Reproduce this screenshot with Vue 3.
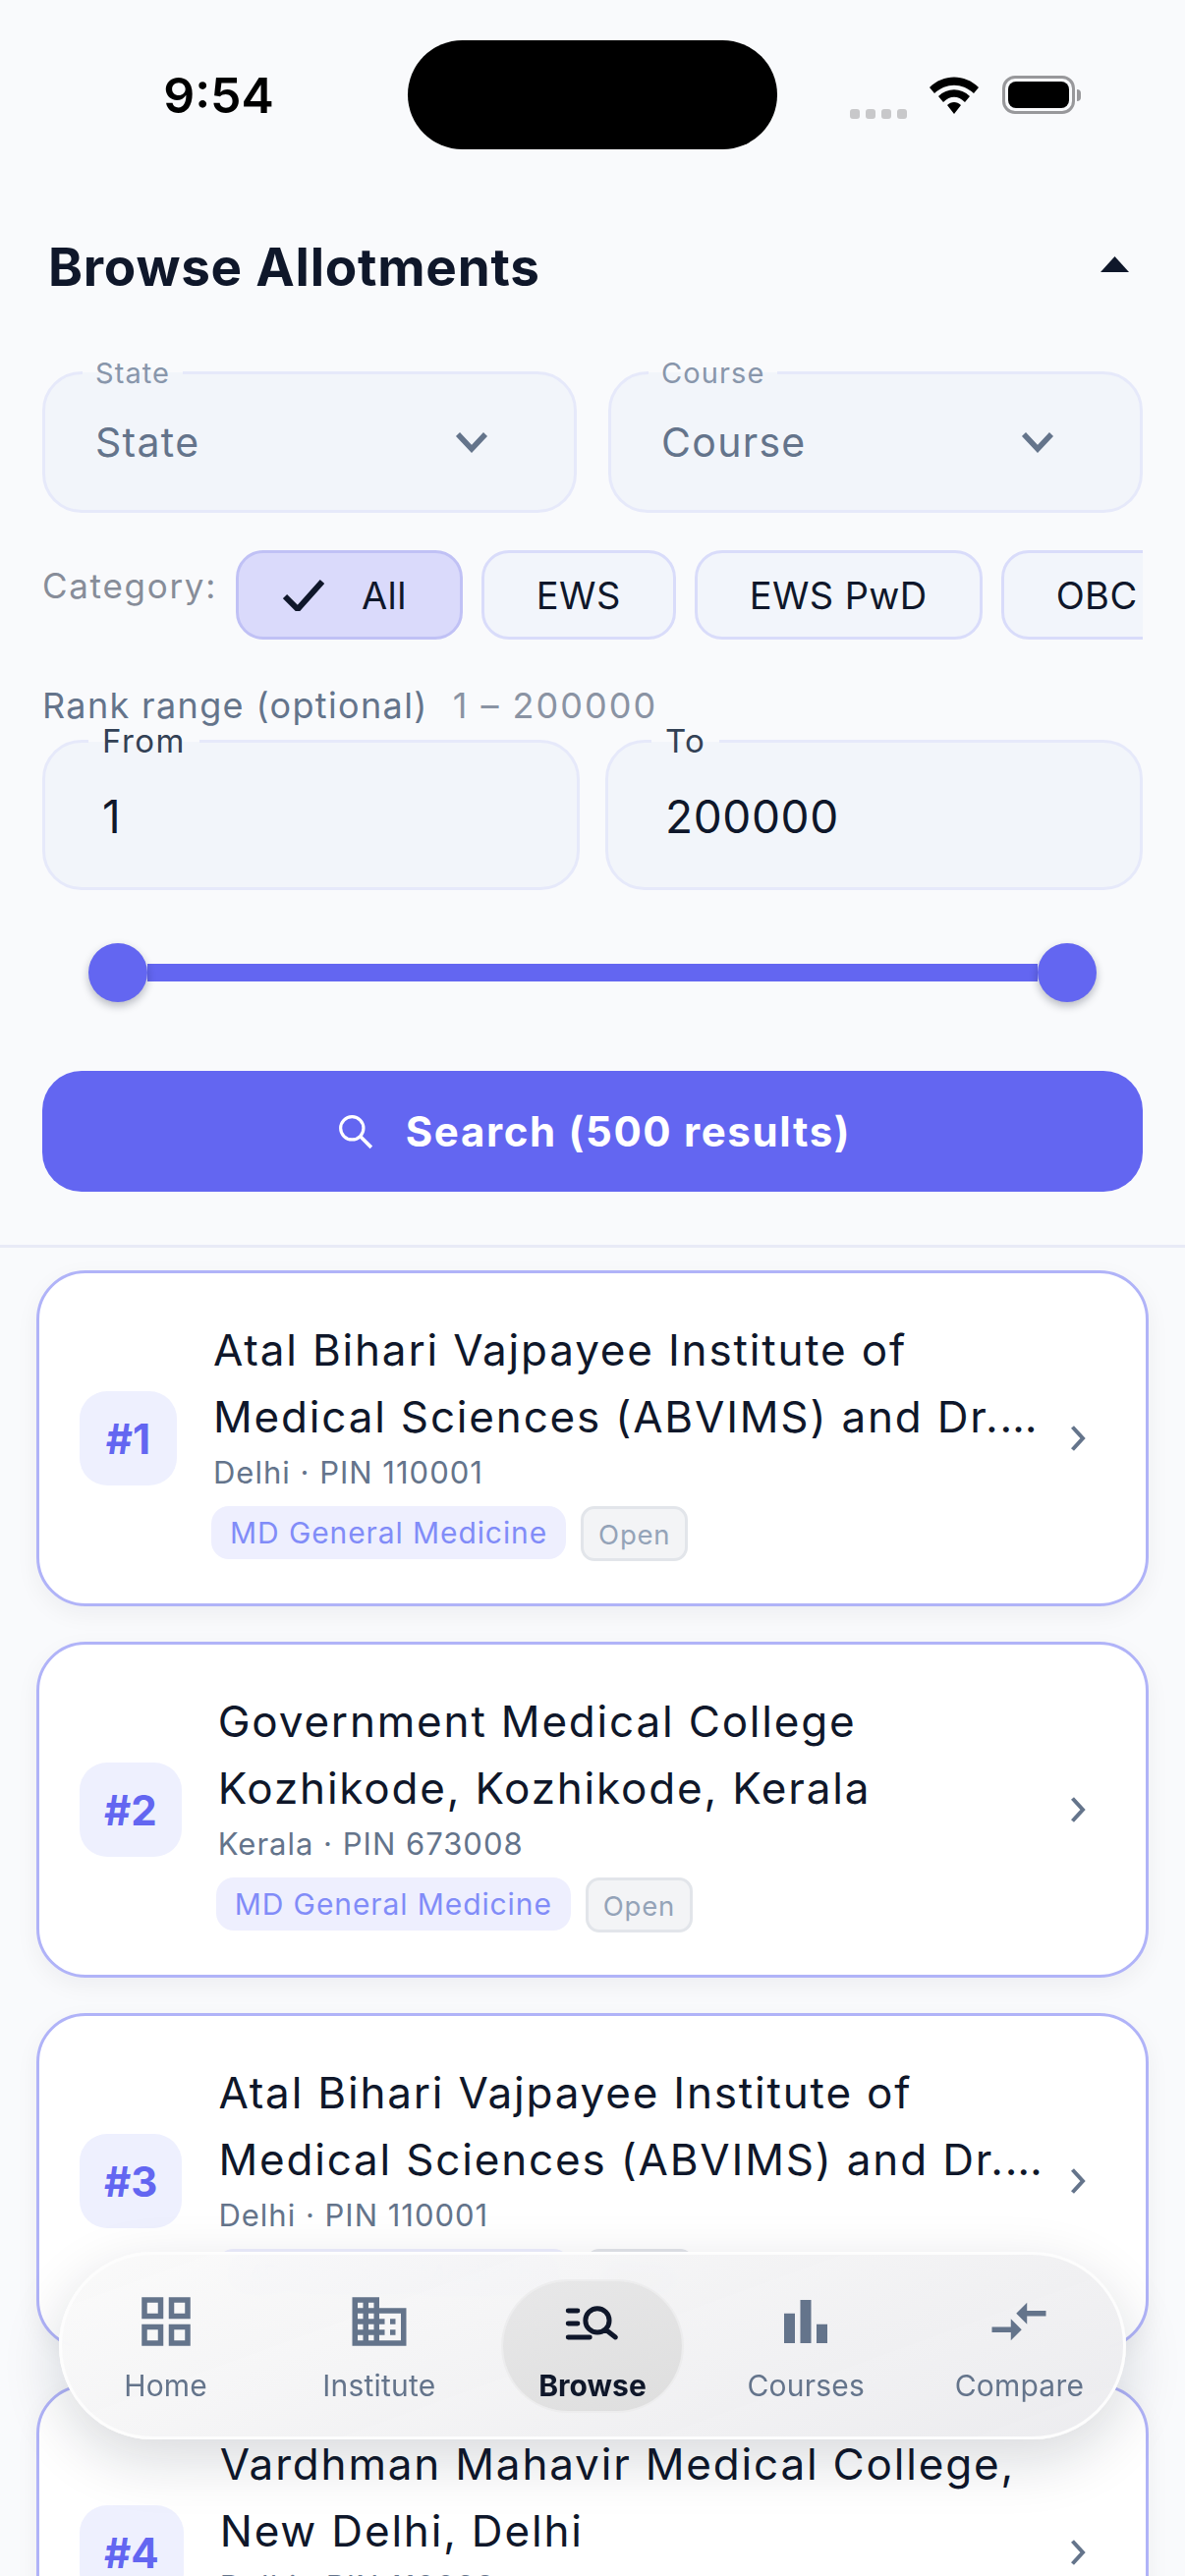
<template>
  <div class="screen">
    <div class="status">
      <div class="status-left"><span class="time">9:54</span></div>
      <div class="island"></div>
      <div class="status-right">
        <div class="signal"><i v-for="n in 4" :key="n"></i></div>
        <svg class="wifi" viewBox="0 0 50 38"><path d="M0 11 C14 -3 36 -3 50 11 L45 17 C33 6 17 6 5 17Z M9 20 C18 11 32 11 41 20 L36 26 C29 19 21 19 14 26Z M18 29 C22 25 28 25 32 29 L25 38Z" fill="#000"/></svg>
        <div class="battery"><div class="battery-fill"></div></div>
        <div class="battery-nub"></div>
      </div>
    </div>

    <div class="filters">
      <div class="title-row">
        <h1>Browse Allotments</h1>
        <svg class="collapse" viewBox="0 0 29 16"><path d="M14.5 0 L29 16 H0Z" fill="#0f172a"/></svg>
      </div>

      <div class="two-col select-row">
        <div v-for="s in selects" :key="s" class="field select">
          <span class="float-label">{{ s }}</span>
          <span class="select-value">{{ s }}</span>
          <svg class="select-arrow" viewBox="0 0 34 22"><path d="M3 3 L17 18 L31 3" fill="none" stroke="#64748b" stroke-width="5.5"/></svg>
        </div>
      </div>

      <div class="category-row">
        <span class="category-label">Category:</span>
        <div class="chips">
          <div v-for="c in categories" :key="c" class="chip" :class="{ on: c === 'All' }">
            <svg v-if="c === 'All'" class="check" viewBox="0 0 42 32"><path d="M2 17 L15 30 L40 2" fill="none" stroke="#0f172a" stroke-width="6"/></svg>
            {{ c }}
          </div>
        </div>
      </div>

      <div class="rank-label">Rank range (optional)<span>1 – 200000</span></div>
      <div class="two-col rank-row">
        <div v-for="r in ranks" :key="r.label" class="field rank">
          <span class="float-label dark">{{ r.label }}</span>
          <span class="rank-value">{{ r.value }}</span>
        </div>
      </div>

      <div class="slider">
        <div class="thumb"></div>
        <div class="track"></div>
        <div class="thumb"></div>
      </div>

      <button class="search">
        <svg viewBox="0 0 34 34"><circle cx="13.5" cy="13.5" r="11" fill="none" stroke="#fff" stroke-width="3"/><path d="M21.5 21.5 L32 32" stroke="#fff" stroke-width="3.4"/></svg>
        <span>Search (500 results)</span>
      </button>
    </div>

    <div class="list">
      <div v-for="(item, i) in results" :key="i" class="card">
        <div class="rank-badge">#{{ i + 1 }}</div>
        <div class="card-body">
          <div class="card-title">{{ item.name }}</div>
          <div class="card-sub">{{ item.state }} · PIN {{ item.pin }}</div>
          <div class="tags">
            <span class="tag-course">MD General Medicine</span>
            <span class="tag-open">Open</span>
          </div>
        </div>
        <svg class="chevron" viewBox="0 0 16 28"><path d="M2.5 2.5 L13 14 L2.5 25.5" fill="none" stroke="#64748b" stroke-width="4"/></svg>
      </div>
    </div>

    <nav class="tabbar">
      <div v-for="t in tabs" :key="t.label" class="tab" :class="{ active: t.label === 'Browse' }">
        <svg viewBox="0 0 24 24">
          <path v-if="t.line" :d="t.line" fill="none" stroke="currentColor" stroke-width="1.8" stroke-linecap="round"/>
          <path v-else :d="t.icon" fill="currentColor"/>
        </svg>
        <span>{{ t.label }}</span>
      </div>
    </nav>
  </div>
</template>

<script setup>
const selects = ['State', 'Course']
const categories = ['All', 'EWS', 'EWS PwD', 'OBC', 'OBC PwD']
const ranks = [
  { label: 'From', value: '1' },
  { label: 'To', value: '200000' }
]

const abvims = 'Atal Bihari Vajpayee Institute of Medical Sciences (ABVIMS) and Dr. Ram Manohar Lohia Hospital, New Delhi'
const results = [
  { name: abvims, state: 'Delhi', pin: '110001' },
  { name: 'Government Medical College Kozhikode, Kozhikode, Kerala', state: 'Kerala', pin: '673008' },
  { name: abvims, state: 'Delhi', pin: '110001' },
  { name: 'Vardhman Mahavir Medical College, New Delhi, Delhi', state: 'Delhi', pin: '110029' }
]

const tabs = [
  { label: 'Home', icon: 'M3 3v8h8V3H3zm6 6H5V5h4v4zm-6 4v8h8v-8H3zm6 6H5v-4h4v4zm4-16v8h8V3h-8zm6 6h-4V5h4v4zm-6 4v8h8v-8h-8zm6 6h-4v-4h4v4z' },
  { label: 'Institute', icon: 'M12 7V3H2v18h20V7H12zM6 19H4v-2h2v2zm0-4H4v-2h2v2zm0-4H4V9h2v2zm0-4H4V5h2v2zm4 12H8v-2h2v2zm0-4H8v-2h2v2zm0-4H8V9h2v2zm0-4H8V5h2v2zm10 12h-8v-2h2v-2h-2v-2h2v-2h-2V9h8v10zm-2-8h-2v2h2v-2zm0 4h-2v2h2v-2z' },
  { label: 'Browse', line: 'M3 8H6.5M3 12.7H6.5M3 17.8H11M18.2 11.6a4.4 4.4 0 1 1-8.8 0a4.4 4.4 0 1 1 8.8 0M16.9 15L20.5 17.8' },
  { label: 'Courses', icon: 'M4 9h4v11H4zm12 4h4v7h-4zm-6-9h4v16h-4z' },
  { label: 'Compare', icon: 'M9.01 14H2v2h7.01v3L13 15l-3.99-4v3zm5.98-1v-3H22V8h-7.01V5L11 9l3.99 4z' }
]
</script>

<style>
html, body { background: #f9fafc; }
</style>

<style scoped>
.screen {
  position: relative;
  width: 1206px;
  height: 2622px;
  overflow: hidden;
  background: #f9fafc;
  font-family: Inter, "Noto Sans", sans-serif;
  color: #0f172a;
}

.status {
  display: flex;
  padding-top: 41px;
  height: 111px;
}
.status-left {
  width: 415px;
  display: flex;
  justify-content: center;
  align-items: center;
  padding-left: 30px;
  box-sizing: border-box;
}
.time { font-size: 50px; font-weight: 600; color: #000; }
.island { width: 376px; height: 111px; border-radius: 56px; background: #000; }
.status-right {
  flex: 1;
  display: flex;
  align-items: center;
  padding-left: 74px;
}
.signal { display: flex; gap: 6px; margin-top: 38px; margin-right: 23px; }
.signal i { width: 10px; height: 10px; border-radius: 3px; background: #c8c8ca; }
.wifi { width: 50px; height: 38px; margin-right: 24px; }
.battery {
  box-sizing: border-box;
  width: 74px;
  height: 39px;
  border: 3.5px solid #98989b;
  border-radius: 13px;
  padding: 3px;
}
.battery-fill { height: 100%; border-radius: 8px; background: #000; }
.battery-nub { width: 4px; height: 12px; margin-left: 2px; border-radius: 0 4px 4px 0; background: #98989b; }

.filters { padding: 89px 43px 0; }
.title-row { display: flex; justify-content: space-between; align-items: center; height: 62px; padding: 0 14px 0 6px; }
h1 { margin: 0; font-size: 53px; font-weight: 700; letter-spacing: 0.75px; }
.collapse { width: 29px; height: 16px; margin-bottom: 6px; }

.two-col { display: flex; }
.select-row { margin-top: 75px; gap: 32px; }
.rank-row { margin-top: 14px; gap: 26px; }

.field {
  position: relative;
  flex: 1;
  box-sizing: border-box;
  display: flex;
  align-items: center;
  background: #f2f5fa;
  border: 3px solid #e6e9fa;
  border-radius: 40px;
}
.select { height: 144px; padding: 0 51px; justify-content: space-between; }
.rank { height: 153px; padding: 0 58px; }
.float-label {
  position: absolute;
  left: 38px;
  top: -20px;
  padding: 0 13px;
  background: linear-gradient(#f9fafc 50%, #f2f5fa 50%);
  font-size: 29px;
  line-height: 37px;
  letter-spacing: 1.1px;
  color: #8896ab;
}
.float-label.dark { top: -23px; left: 44px; padding: 0 14px; font-size: 33px; line-height: 43px; letter-spacing: 1.4px; color: #334155; }
.select-value { font-size: 41px; letter-spacing: 1.3px; color: #64748b; }
.select-arrow { width: 34px; height: 22px; margin-right: 36px; }
.rank-value { font-size: 46px; letter-spacing: 0.6px; margin-top: 3px; }

.category-row { display: flex; margin-top: 38px; gap: 20px; }
.category-label { width: 177px; flex-shrink: 0; font-size: 35px; line-height: 40px; margin-top: 16px; letter-spacing: 1.7px; color: #878d99; white-space: nowrap; }
.chips { flex: 1; min-width: 0; display: flex; gap: 19px; overflow: hidden; }
.chip {
  flex-shrink: 0;
  box-sizing: border-box;
  height: 91px;
  padding: 0 53px;
  display: flex;
  align-items: center;
  background: #f2f5fb;
  border: 3px solid #d9dcfa;
  border-radius: 28px;
  font-size: 38px;
  letter-spacing: 0.4px;
}
.chip.on { background: #dadafb; border-color: #c0c1f5; padding: 0 54px 0 45px; }
.check { width: 42px; height: 32px; margin-right: 38px; }

.rank-label { margin-top: 46px; font-size: 36px; line-height: 42px; letter-spacing: 1.35px; color: #64748b; white-space: nowrap; }
.rank-label span { margin-left: 25px; color: #8a93a3; letter-spacing: 2px; }

.slider { display: flex; align-items: center; margin: 54px 47px 0; height: 60px; }
.thumb { width: 60px; height: 60px; flex-shrink: 0; border-radius: 50%; background: #6366f1; box-shadow: 0 4px 8px rgba(15, 23, 42, 0.28); position: relative; z-index: 1; }
.track { flex: 1; height: 18px; background: #6366f1; }

.search {
  display: flex;
  justify-content: center;
  align-items: center;
  gap: 33px;
  width: 100%;
  height: 123px;
  margin-top: 70px;
  padding: 0 0 0 4px;
  border: 0;
  border-radius: 40px;
  background: #6366f1;
  color: #fff;
  font-family: inherit;
  font-size: 42px;
  font-weight: 700;
  letter-spacing: 1.65px;
}
.search svg { width: 36px; height: 36px; }

.list {
  margin-top: 54px;
  border-top: 3px solid #e8eaf6;
  padding: 23px 37px 0;
  display: flex;
  flex-direction: column;
  gap: 36px;
}
.card {
  flex-shrink: 0;
  box-sizing: border-box;
  height: 342px;
  display: flex;
  align-items: center;
  padding: 0 61px 0 41px;
  background: #fff;
  border: 3px solid #b0b3f8;
  border-radius: 50px;
  box-shadow: 0 8px 24px rgba(15, 23, 42, 0.05);
}
.rank-badge {
  flex-shrink: 0;
  box-sizing: border-box;
  min-width: 99px;
  height: 96px;
  padding: 0 25px;
  display: flex;
  justify-content: center;
  align-items: center;
  border-radius: 28px;
  background: #eef0fe;
  color: #6366f1;
  font-size: 42px;
  font-weight: 700;
}
.card-body { flex: 1; min-width: 0; margin-left: 37px; }
.card-title {
  font-size: 44px;
  line-height: 68px;
  letter-spacing: 1.82px;
  display: -webkit-box;
  -webkit-line-clamp: 2;
  -webkit-box-orient: vertical;
  overflow: hidden;
}
.card-sub { font-size: 31px; line-height: 46px; letter-spacing: 1px; color: #64748b; }
.tags { display: flex; align-items: flex-start; gap: 15px; margin: 11px 0 0 -2px; }
.tag-course {
  height: 54px;
  padding: 0 19px;
  display: flex;
  align-items: center;
  border-radius: 18px;
  background: #eeeffe;
  color: #818cf8;
  font-size: 30px;
  letter-spacing: 0.9px;
}
.tag-open {
  box-sizing: border-box;
  height: 56px;
  padding: 2px 15px 0;
  display: flex;
  align-items: center;
  border: 3px solid #e2e5ea;
  border-radius: 14px;
  background: #f3f4f6;
  color: #94a3b8;
  font-size: 27.5px;
  letter-spacing: 0.8px;
}
.chevron { width: 16px; height: 28px; flex-shrink: 0; margin-left: 13px; }

.tabbar {
  position: absolute;
  left: 60px;
  top: 2292px;
  width: 1086px;
  height: 191px;
  box-sizing: border-box;
  display: flex;
  align-items: center;
  border-radius: 96px;
  background: linear-gradient(160deg, rgba(250, 250, 250, 0.96), rgba(235, 235, 238, 0.94));
  backdrop-filter: blur(12px);
  box-shadow: inset 0 0 0 3px #fdfdfd, 0 20px 60px rgba(15, 23, 42, 0.16);
}
.tab {
  flex: 1;
  display: flex;
  flex-direction: column;
  align-items: center;
  color: #64748b;
}
.tab svg { width: 66px; height: 66px; margin-top: 8px; }
.tab span { margin-top: 14px; margin-bottom: 8px; font-size: 30px; line-height: 36px; font-weight: 400; letter-spacing: 0.2px; }
.tab.active { width: 182px; flex: none; margin: 0 17.6px; border-radius: 66px; background: linear-gradient(160deg, #e8e8e9, #dedede); color: #0f172a; box-shadow: 0 0 0 2px #ededee; }
.tab.active span { font-weight: 700; letter-spacing: 0; }
</style>
